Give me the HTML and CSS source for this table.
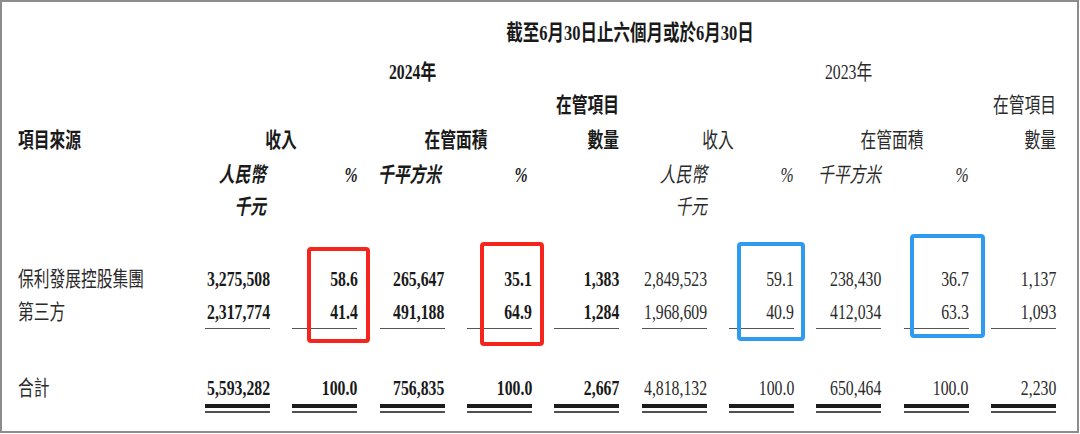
FILE: index.html
```html
<!DOCTYPE html>
<html lang="zh-Hant">
<head>
<meta charset="utf-8">
<title>收入及在管面積</title>
<link rel="stylesheet" href="styles.css">
</head>
<body>
<div class="frame">
  <div class="sheet">
    <div class="row r-title">
      <div></div>
      <div class="span10 c b title"><span class="t">截至6月30日止六個月或於6月30日</span></div>
    </div>
    <div class="row r-year">
      <div></div>
      <div class="span5 c b"><span class="t">2024年</span></div>
      <div class="span5 c"><span class="t">2023年</span></div>
    </div>
    <div class="row r-proj">
      <div class="g6 b"><span class="t">在管項目</span></div>
      <div class="g11"><span class="t">在管項目</span></div>
    </div>
    <div class="row r-head">
      <div class="l b"><span class="t">項目來源</span></div>
      <div class="span2 c b"><span class="t">收入</span></div>
      <div class="span2 c b"><span class="t">在管面積</span></div>
      <div class="b"><span class="t">數量</span></div>
      <div class="span2 c"><span class="t">收入</span></div>
      <div class="span2 c"><span class="t">在管面積</span></div>
      <div><span class="t">數量</span></div>
    </div>
    <div class="row r-unit">
      <div></div>
      <div class="i b in"><span class="t">人民幣</span></div>
      <div class="i b"><span class="t">%</span></div>
      <div class="i b in"><span class="t">千平方米</span></div>
      <div class="i b in"><span class="t">%</span></div>
      <div></div>
      <div class="i"><span class="t">人民幣</span></div>
      <div class="i"><span class="t">%</span></div>
      <div class="i"><span class="t">千平方米</span></div>
      <div class="i"><span class="t">%</span></div>
      <div></div>
    </div>
    <div class="row r-unit2">
      <div></div>
      <div class="i b in"><span class="t">千元</span></div>
      <div class="g7 i"><span class="t">千元</span></div>
    </div>

    <div class="row r-data first">
      <div class="l"><span class="t">保利發展控股集團</span></div>
      <div class="b"><span class="t">3,275,508</span></div>
      <div class="b"><span class="t">58.6</span></div>
      <div class="b"><span class="t">265,647</span></div>
      <div class="b"><span class="t">35.1</span></div>
      <div class="b"><span class="t">1,383</span></div>
      <div><span class="t">2,849,523</span></div>
      <div><span class="t">59.1</span></div>
      <div><span class="t">238,430</span></div>
      <div><span class="t">36.7</span></div>
      <div><span class="t">1,137</span></div>
    </div>
    <div class="row r-data">
      <div class="l"><span class="t">第三方</span></div>
      <div class="b"><span class="t">2,317,774</span></div>
      <div class="b"><span class="t">41.4</span></div>
      <div class="b"><span class="t">491,188</span></div>
      <div class="b"><span class="t">64.9</span></div>
      <div class="b"><span class="t">1,284</span></div>
      <div><span class="t">1,968,609</span></div>
      <div><span class="t">40.9</span></div>
      <div><span class="t">412,034</span></div>
      <div><span class="t">63.3</span></div>
      <div><span class="t">1,093</span></div>
    </div>
    <div class="row r-rule">
      <div></div>
      <div class="rule"></div><div class="rule"></div><div class="rule"></div><div class="rule"></div><div class="rule"></div>
      <div class="rule"></div><div class="rule"></div><div class="rule"></div><div class="rule"></div><div class="rule"></div>
    </div>

    <div class="row r-total">
      <div class="l"><span class="t">合計</span></div>
      <div class="b"><span class="t">5,593,282</span></div>
      <div class="b"><span class="t">100.0</span></div>
      <div class="b"><span class="t">756,835</span></div>
      <div class="b"><span class="t">100.0</span></div>
      <div class="b"><span class="t">2,667</span></div>
      <div><span class="t">4,818,132</span></div>
      <div><span class="t">100.0</span></div>
      <div><span class="t">650,464</span></div>
      <div><span class="t">100.0</span></div>
      <div><span class="t">2,230</span></div>
    </div>
    <div class="row r-dbl">
      <div></div>
      <div class="dbl"></div><div class="dbl"></div><div class="dbl"></div><div class="dbl"></div><div class="dbl"></div>
      <div class="dbl"></div><div class="dbl"></div><div class="dbl"></div><div class="dbl"></div><div class="dbl"></div>
    </div>
  </div>

  <div class="hl red hl-a"></div>
  <div class="hl red hl-b"></div>
  <div class="hl blue hl-c"></div>
  <div class="hl blue hl-d"></div>
</div>
</body>
</html>
```

FILE: styles.css
```css
* { box-sizing: border-box; margin: 0; padding: 0; }
html, body { background: #ffffff; }
body {
  margin: 0;
  font-family: "Liberation Serif", "Noto Sans CJK TC", serif;
  color: #2a2a2a;
}

.frame {
  position: relative;
  width: 1079px;
  height: 433px;
  border: 2px solid #8c8c8c;
  background: #ffffff;
  padding: 14px 0 0 16px;
  overflow: hidden;
}

.sheet { display: flex; flex-direction: column; }

.row {
  display: grid;
  grid-template-columns: 164.67px repeat(10, 65px);
  column-gap: 22.33px;
  align-items: center;
  font-size: 21px;
  line-height: 24px;
  white-space: nowrap;
}
.row > div {
  display: flex;
  justify-content: flex-end;
  align-items: center;
  min-width: 0;
}
.row > .c { justify-content: center; }
.row > .l { justify-content: flex-start; }

.t {
  display: inline-block;
  flex: none;
  transform: scaleX(0.75);
  transform-origin: 100% 50%;
}
.c .t { transform-origin: 50% 50%; }
.l .t { transform-origin: 0 50%; }

.b { font-weight: 700; color: #1a1a1a; }
.i { font-style: italic; }
.row > .in { padding-right: 4px; }

.span2 { grid-column: span 2; }
.span5 { grid-column: span 5; }
.span10 { grid-column: span 10; }
.g6 { grid-column: 6; }
.g7 { grid-column: 7; }
.g11 { grid-column: 11; }

.title { font-size: 22px; }

.r-title { height: 34px; }
.r-year { height: 43px; }
.r-proj { height: 24px; }
.r-head { height: 45px; }
.r-unit { height: 26px; }
.r-unit2 { height: 38px; }
.r-data { height: 33px; }
.r-data.first { margin-top: 36px; }
.r-rule { height: 1px; align-items: start; }
.r-total { height: 32px; margin-top: 43px; }
.r-dbl { height: 9px; align-items: start; }

.row > .rule { height: 1px; background: #555555; }
.row > .dbl {
  height: 9px;
  border-top: 4px solid #1c1c1c;
  border-bottom: 2px solid #505050;
}

.hl {
  position: absolute;
  border: 4px solid;
  border-radius: 4px;
}
.red { border-color: #f5251d; }
.blue { border-color: #2e9bf1; }
.hl-a { left: 304.5px; top: 244.7px; width: 63px; height: 96.3px; }
.hl-b { left: 478px; top: 239.7px; width: 64px; height: 104.3px; }
.hl-c { left: 735px; top: 239.7px; width: 68px; height: 99.3px; }
.hl-d { left: 908px; top: 232px; width: 75px; height: 104px; }
```
